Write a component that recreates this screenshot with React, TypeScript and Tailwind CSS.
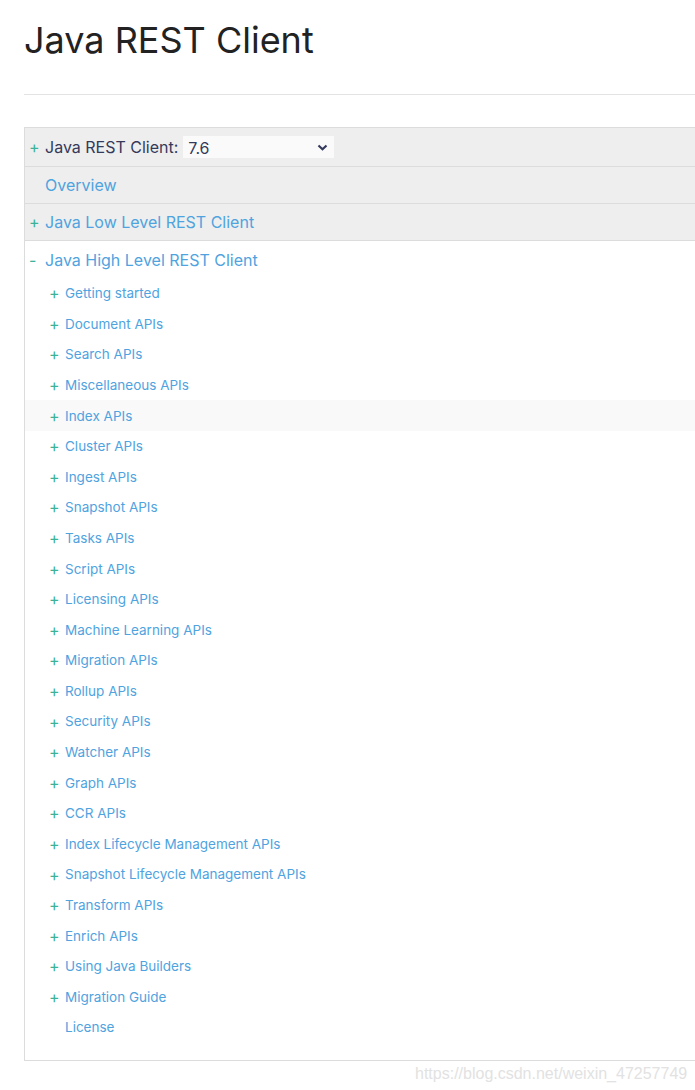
import { useState } from "react";

const sections = [
  "Getting started",
  "Document APIs",
  "Search APIs",
  "Miscellaneous APIs",
  "Index APIs",
  "Cluster APIs",
  "Ingest APIs",
  "Snapshot APIs",
  "Tasks APIs",
  "Script APIs",
  "Licensing APIs",
  "Machine Learning APIs",
  "Migration APIs",
  "Rollup APIs",
  "Security APIs",
  "Watcher APIs",
  "Graph APIs",
  "CCR APIs",
  "Index Lifecycle Management APIs",
  "Snapshot Lifecycle Management APIs",
  "Transform APIs",
  "Enrich APIs",
  "Using Java Builders",
  "Migration Guide",
];

function Toggle({ open = false }: { open?: boolean }) {
  return (
    <span className="inline-block w-[13px] text-[16px] leading-none text-[#3bb39a]">
      {open ? "-" : "+"}
    </span>
  );
}

export default function App() {
  const [version, setVersion] = useState("7.6");

  return (
    <div
      className="relative min-h-[1090px] overflow-hidden bg-white"
      style={{ fontFamily: "Inter, 'Noto Sans', sans-serif" }}
    >
      <h1 className="ml-6 pt-[16px] text-[36px] leading-[48px] font-normal text-[#222]">
        Java REST Client
      </h1>
      <div className="mt-[30px] ml-6 border-t border-[#e3e3e3]" />

      <div className="mt-[32px] ml-6 border-b border-l border-[#dcdcdc] pb-[17px]">
        <div className="flex h-[40px] items-center border-y border-[#dcdcdc] bg-[#eeeeee] pl-[4px]">
          <Toggle />
          <span className="ml-[3px] text-[16px] text-[#343a5c]">Java REST Client:</span>
          <div className="relative ml-[5px] h-[22px] w-[151px] bg-[#fafafa]">
            <select
              value={version}
              onChange={(e) => setVersion(e.target.value)}
              className="h-full w-full appearance-none bg-transparent pl-[5px] text-[16px] text-[#343a5c] outline-none"
            >
              <option>7.6</option>
              <option>7.5</option>
              <option>7.4</option>
            </select>
            <svg
              className="pointer-events-none absolute top-[8px] right-[6px]"
              width="11"
              height="7"
              viewBox="0 0 11 7"
            >
              <path d="M1.5 1.5 5.5 5.2 9.5 1.5" fill="none" stroke="#343a5c" strokeWidth="2.2" />
            </svg>
          </div>
        </div>
        <div className="flex h-[37px] items-center border-b border-[#dcdcdc] bg-[#eeeeee] pl-[20px] text-[16px] text-[#4fa3df]">
          Overview
        </div>
        <div className="flex h-[37px] items-center border-b border-[#dcdcdc] bg-[#eeeeee] pl-[4px] text-[16px] text-[#4fa3df]">
          <Toggle />
          <span className="ml-[3px]">Java Low Level REST Client</span>
        </div>
        <div className="flex h-[37px] items-center pl-[4px] text-[16px] text-[#4fa3df]">
          <Toggle open />
          <span className="ml-[3px]">Java High Level REST Client</span>
        </div>

        <ul>
          {sections.map((s) => (
            <li
              key={s}
              className={`flex h-[30.6px] items-center pl-[24px] text-[13.5px] text-[#4fa3df] ${
                s === "Index APIs" ? "bg-[#f9f9f9]" : ""
              }`}
            >
              <Toggle />
              <span className="ml-[3px]">{s}</span>
            </li>
          ))}
          <li className="flex h-[30.6px] items-center pl-[40px] text-[13.5px] text-[#4fa3df]">
            License
          </li>
        </ul>
      </div>

      <div
        className="absolute top-[1062px] left-[415px] text-[16px] text-[#e2e2e2]"
        style={{ fontFamily: "'Liberation Sans', Arial, sans-serif" }}
      >
        https://blog.csdn.net/weixin_47257749
      </div>
    </div>
  );
}
